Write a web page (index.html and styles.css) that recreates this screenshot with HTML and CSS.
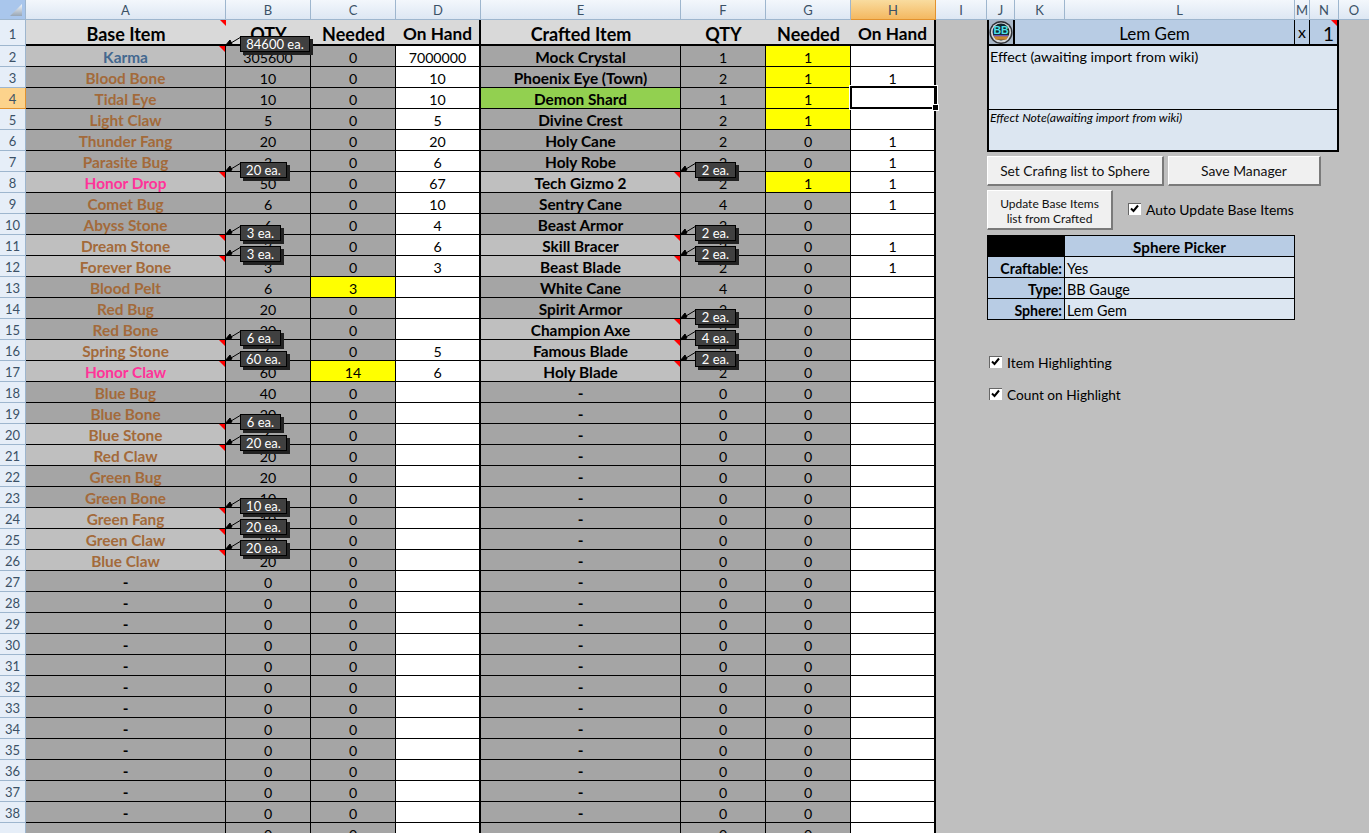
FILE: index.html
```html
<!DOCTYPE html>
<html lang="en">
<head>
<meta charset="utf-8">
<title>Crafting Sheet</title>
<link rel="stylesheet" href="styles.css">
</head>
<body>
<div class="app">
<div class="heads">
<div class="hd corner"><svg width="12" height="12" viewBox="0 0 12 12"><defs><linearGradient id="cg" x1="0" y1="0" x2="0" y2="1"><stop offset="0" stop-color="#f4f8fd"/><stop offset="1" stop-color="#98a6b5"/></linearGradient></defs><path d="M12 0V12H0Z" fill="url(#cg)"/></svg></div>
<div class="hd">A</div><div class="hd">B</div><div class="hd">C</div><div class="hd">D</div><div class="hd">E</div><div class="hd">F</div><div class="hd">G</div><div class="hd on">H</div><div class="hd">I</div><div class="hd">J</div><div class="hd">K</div><div class="hd">L</div><div class="hd">M</div><div class="hd">N</div><div class="hd">O</div>
</div>
<div class="work">
<div class="sheet">
<div class="rh">1</div><div class="c t"><i class="tri"></i>Base Item</div><div class="c t">QTY</div><div class="c t">Needed</div><div class="c t d">On Hand</div><div class="c t">Crafted Item</div><div class="c t">QTY</div><div class="c t">Needed</div><div class="c t d">On Hand</div>
<div class="rh">2</div><div class="c n l karma">Karma<span class="note w70"><svg class="arr" width="16" height="11" viewBox="0 0 16 11"><path d="M16 1L6 7M0 10L7 8L5 4Z"/></svg>84600 ea.</span><i class="tri"></i></div><div class="c">305600</div><div class="c">0</div><div class="c w d">7000000</div><div class="c n">Mock Crystal</div><div class="c">1</div><div class="c y">1</div><div class="c w d"></div>
<div class="rh">3</div><div class="c n br">Blood Bone</div><div class="c">10</div><div class="c">0</div><div class="c w d">10</div><div class="c n">Phoenix Eye (Town)</div><div class="c">2</div><div class="c y">1</div><div class="c w d">1</div>
<div class="rh on">4</div><div class="c n br">Tidal Eye</div><div class="c">10</div><div class="c">0</div><div class="c w d">10</div><div class="c n g">Demon Shard</div><div class="c">1</div><div class="c y">1</div><div class="c w d"><span class="sel"></span></div>
<div class="rh">5</div><div class="c n br">Light Claw</div><div class="c">5</div><div class="c">0</div><div class="c w d">5</div><div class="c n">Divine Crest</div><div class="c">2</div><div class="c y">1</div><div class="c w d"></div>
<div class="rh">6</div><div class="c n br">Thunder Fang</div><div class="c">20</div><div class="c">0</div><div class="c w d">20</div><div class="c n">Holy Cane</div><div class="c">2</div><div class="c">0</div><div class="c w d">1</div>
<div class="rh">7</div><div class="c n br">Parasite Bug</div><div class="c">3</div><div class="c">0</div><div class="c w d">6</div><div class="c n">Holy Robe</div><div class="c">2</div><div class="c">0</div><div class="c w d">1</div>
<div class="rh">8</div><div class="c n l pk">Honor Drop<span class="note w47"><svg class="arr" width="16" height="11" viewBox="0 0 16 11"><path d="M16 1L6 7M0 10L7 8L5 4Z"/></svg>20 ea.</span><i class="tri"></i></div><div class="c">50</div><div class="c">0</div><div class="c w d">67</div><div class="c n l">Tech Gizmo 2<span class="note w41"><svg class="arr" width="16" height="11" viewBox="0 0 16 11"><path d="M16 1L6 7M0 10L7 8L5 4Z"/></svg>2 ea.</span><i class="tri"></i></div><div class="c">2</div><div class="c y">1</div><div class="c w d">1</div>
<div class="rh">9</div><div class="c n br">Comet Bug</div><div class="c">6</div><div class="c">0</div><div class="c w d">10</div><div class="c n">Sentry Cane</div><div class="c">4</div><div class="c">0</div><div class="c w d">1</div>
<div class="rh">10</div><div class="c n br">Abyss Stone</div><div class="c">6</div><div class="c">0</div><div class="c w d">4</div><div class="c n">Beast Armor</div><div class="c">2</div><div class="c">0</div><div class="c w d"></div>
<div class="rh">11</div><div class="c n l br">Dream Stone<span class="note w41"><svg class="arr" width="16" height="11" viewBox="0 0 16 11"><path d="M16 1L6 7M0 10L7 8L5 4Z"/></svg>3 ea.</span><i class="tri"></i></div><div class="c">3</div><div class="c">0</div><div class="c w d">6</div><div class="c n l">Skill Bracer<span class="note w41"><svg class="arr" width="16" height="11" viewBox="0 0 16 11"><path d="M16 1L6 7M0 10L7 8L5 4Z"/></svg>2 ea.</span><i class="tri"></i></div><div class="c">2</div><div class="c">0</div><div class="c w d">1</div>
<div class="rh">12</div><div class="c n l br">Forever Bone<span class="note w41"><svg class="arr" width="16" height="11" viewBox="0 0 16 11"><path d="M16 1L6 7M0 10L7 8L5 4Z"/></svg>3 ea.</span><i class="tri"></i></div><div class="c">3</div><div class="c">0</div><div class="c w d">3</div><div class="c n l">Beast Blade<span class="note w41"><svg class="arr" width="16" height="11" viewBox="0 0 16 11"><path d="M16 1L6 7M0 10L7 8L5 4Z"/></svg>2 ea.</span><i class="tri"></i></div><div class="c">2</div><div class="c">0</div><div class="c w d">1</div>
<div class="rh">13</div><div class="c n br">Blood Pelt</div><div class="c">6</div><div class="c y">3</div><div class="c w d"></div><div class="c n">White Cane</div><div class="c">4</div><div class="c">0</div><div class="c w d"></div>
<div class="rh">14</div><div class="c n br">Red Bug</div><div class="c">20</div><div class="c">0</div><div class="c w d"></div><div class="c n">Spirit Armor</div><div class="c">2</div><div class="c">0</div><div class="c w d"></div>
<div class="rh">15</div><div class="c n br">Red Bone</div><div class="c">20</div><div class="c">0</div><div class="c w d"></div><div class="c n l">Champion Axe<span class="note w41"><svg class="arr" width="16" height="11" viewBox="0 0 16 11"><path d="M16 1L6 7M0 10L7 8L5 4Z"/></svg>2 ea.</span><i class="tri"></i></div><div class="c">2</div><div class="c">0</div><div class="c w d"></div>
<div class="rh">16</div><div class="c n l br">Spring Stone<span class="note w41"><svg class="arr" width="16" height="11" viewBox="0 0 16 11"><path d="M16 1L6 7M0 10L7 8L5 4Z"/></svg>6 ea.</span><i class="tri"></i></div><div class="c">6</div><div class="c">0</div><div class="c w d">5</div><div class="c n l">Famous Blade<span class="note w41"><svg class="arr" width="16" height="11" viewBox="0 0 16 11"><path d="M16 1L6 7M0 10L7 8L5 4Z"/></svg>4 ea.</span><i class="tri"></i></div><div class="c">2</div><div class="c">0</div><div class="c w d"></div>
<div class="rh">17</div><div class="c n l pk">Honor Claw<span class="note w47"><svg class="arr" width="16" height="11" viewBox="0 0 16 11"><path d="M16 1L6 7M0 10L7 8L5 4Z"/></svg>60 ea.</span><i class="tri"></i></div><div class="c">60</div><div class="c y">14</div><div class="c w d">6</div><div class="c n l">Holy Blade<span class="note w41"><svg class="arr" width="16" height="11" viewBox="0 0 16 11"><path d="M16 1L6 7M0 10L7 8L5 4Z"/></svg>2 ea.</span><i class="tri"></i></div><div class="c">2</div><div class="c">0</div><div class="c w d"></div>
<div class="rh">18</div><div class="c n br">Blue Bug</div><div class="c">40</div><div class="c">0</div><div class="c w d"></div><div class="c n">-</div><div class="c">0</div><div class="c">0</div><div class="c w d"></div>
<div class="rh">19</div><div class="c n br">Blue Bone</div><div class="c">20</div><div class="c">0</div><div class="c w d"></div><div class="c n">-</div><div class="c">0</div><div class="c">0</div><div class="c w d"></div>
<div class="rh">20</div><div class="c n l br">Blue Stone<span class="note w41"><svg class="arr" width="16" height="11" viewBox="0 0 16 11"><path d="M16 1L6 7M0 10L7 8L5 4Z"/></svg>6 ea.</span><i class="tri"></i></div><div class="c">6</div><div class="c">0</div><div class="c w d"></div><div class="c n">-</div><div class="c">0</div><div class="c">0</div><div class="c w d"></div>
<div class="rh">21</div><div class="c n l br">Red Claw<span class="note w47"><svg class="arr" width="16" height="11" viewBox="0 0 16 11"><path d="M16 1L6 7M0 10L7 8L5 4Z"/></svg>20 ea.</span><i class="tri"></i></div><div class="c">20</div><div class="c">0</div><div class="c w d"></div><div class="c n">-</div><div class="c">0</div><div class="c">0</div><div class="c w d"></div>
<div class="rh">22</div><div class="c n br">Green Bug</div><div class="c">20</div><div class="c">0</div><div class="c w d"></div><div class="c n">-</div><div class="c">0</div><div class="c">0</div><div class="c w d"></div>
<div class="rh">23</div><div class="c n br">Green Bone</div><div class="c">10</div><div class="c">0</div><div class="c w d"></div><div class="c n">-</div><div class="c">0</div><div class="c">0</div><div class="c w d"></div>
<div class="rh">24</div><div class="c n l br">Green Fang<span class="note w47"><svg class="arr" width="16" height="11" viewBox="0 0 16 11"><path d="M16 1L6 7M0 10L7 8L5 4Z"/></svg>10 ea.</span><i class="tri"></i></div><div class="c">10</div><div class="c">0</div><div class="c w d"></div><div class="c n">-</div><div class="c">0</div><div class="c">0</div><div class="c w d"></div>
<div class="rh">25</div><div class="c n l br">Green Claw<span class="note w47"><svg class="arr" width="16" height="11" viewBox="0 0 16 11"><path d="M16 1L6 7M0 10L7 8L5 4Z"/></svg>20 ea.</span><i class="tri"></i></div><div class="c">20</div><div class="c">0</div><div class="c w d"></div><div class="c n">-</div><div class="c">0</div><div class="c">0</div><div class="c w d"></div>
<div class="rh">26</div><div class="c n l br">Blue Claw<span class="note w47"><svg class="arr" width="16" height="11" viewBox="0 0 16 11"><path d="M16 1L6 7M0 10L7 8L5 4Z"/></svg>20 ea.</span><i class="tri"></i></div><div class="c">20</div><div class="c">0</div><div class="c w d"></div><div class="c n">-</div><div class="c">0</div><div class="c">0</div><div class="c w d"></div>
<div class="rh">27</div><div class="c n">-</div><div class="c">0</div><div class="c">0</div><div class="c w d"></div><div class="c n">-</div><div class="c">0</div><div class="c">0</div><div class="c w d"></div>
<div class="rh">28</div><div class="c n">-</div><div class="c">0</div><div class="c">0</div><div class="c w d"></div><div class="c n">-</div><div class="c">0</div><div class="c">0</div><div class="c w d"></div>
<div class="rh">29</div><div class="c n">-</div><div class="c">0</div><div class="c">0</div><div class="c w d"></div><div class="c n">-</div><div class="c">0</div><div class="c">0</div><div class="c w d"></div>
<div class="rh">30</div><div class="c n">-</div><div class="c">0</div><div class="c">0</div><div class="c w d"></div><div class="c n">-</div><div class="c">0</div><div class="c">0</div><div class="c w d"></div>
<div class="rh">31</div><div class="c n">-</div><div class="c">0</div><div class="c">0</div><div class="c w d"></div><div class="c n">-</div><div class="c">0</div><div class="c">0</div><div class="c w d"></div>
<div class="rh">32</div><div class="c n">-</div><div class="c">0</div><div class="c">0</div><div class="c w d"></div><div class="c n">-</div><div class="c">0</div><div class="c">0</div><div class="c w d"></div>
<div class="rh">33</div><div class="c n">-</div><div class="c">0</div><div class="c">0</div><div class="c w d"></div><div class="c n">-</div><div class="c">0</div><div class="c">0</div><div class="c w d"></div>
<div class="rh">34</div><div class="c n">-</div><div class="c">0</div><div class="c">0</div><div class="c w d"></div><div class="c n">-</div><div class="c">0</div><div class="c">0</div><div class="c w d"></div>
<div class="rh">35</div><div class="c n">-</div><div class="c">0</div><div class="c">0</div><div class="c w d"></div><div class="c n">-</div><div class="c">0</div><div class="c">0</div><div class="c w d"></div>
<div class="rh">36</div><div class="c n">-</div><div class="c">0</div><div class="c">0</div><div class="c w d"></div><div class="c n">-</div><div class="c">0</div><div class="c">0</div><div class="c w d"></div>
<div class="rh">37</div><div class="c n">-</div><div class="c">0</div><div class="c">0</div><div class="c w d"></div><div class="c n">-</div><div class="c">0</div><div class="c">0</div><div class="c w d"></div>
<div class="rh">38</div><div class="c n">-</div><div class="c">0</div><div class="c">0</div><div class="c w d"></div><div class="c n">-</div><div class="c">0</div><div class="c">0</div><div class="c w d"></div>
<div class="rh"></div><div class="c n"></div><div class="c">0</div><div class="c">0</div><div class="c w d"></div><div class="c n"></div><div class="c">0</div><div class="c">0</div><div class="c w d"></div>
</div>
<aside class="side">
<section class="card">
<div class="card-top">
<div class="badge"><svg width="25" height="25" viewBox="0 0 25 25"><circle cx="12.500" cy="12.500" r="12" fill="#2f3136"/><circle cx="12.500" cy="12.500" r="10.500" fill="#d5d8da"/><circle cx="12.500" cy="12" r="8.800" fill="#10262e"/><path d="M4.500 15.500H20.500L18 20H7Z" fill="#c8862e"/><path d="M5 15H20V16.500H5Z" fill="#6a58b8"/><text x="12.500" y="14.500" text-anchor="middle" class="bb">BB</text></svg></div>
<div class="name">Lem Gem</div>
<div class="x">x</div>
<div class="count"><i class="tri"></i>1</div>
</div>
<div class="effect">Effect (awaiting import from wiki)</div>
<div class="effnote">Effect Note(awaiting import from wiki)</div>
</section>
<div class="btns">
<div class="btn b1">Set Crafing list to Sphere</div>
<div class="btn b2">Save Manager</div>
</div>
<div class="btns upd">
<div class="btn b3">Update Base Items<br>list from Crafted</div>
<label class="chk a"><span class="box"><svg width="9" height="9" viewBox="0 0 9 9"><path d="M1 4.500L3.500 7L8 1.500" fill="none" stroke="#000" stroke-width="2"/></svg></span>Auto Update Base Items</label>
</div>
<div class="picker">
<div class="p-k blk"></div><div class="p-h">Sphere Picker</div>
<div class="p-k">Craftable:</div><div class="p-v">Yes</div>
<div class="p-k">Type:</div><div class="p-v">BB Gauge</div>
<div class="p-k">Sphere:</div><div class="p-v">Lem Gem</div>
</div>
<label class="chk h1"><span class="box"><svg width="9" height="9" viewBox="0 0 9 9"><path d="M1 4.500L3.500 7L8 1.500" fill="none" stroke="#000" stroke-width="2"/></svg></span>Item Highlighting</label>
<label class="chk h2"><span class="box"><svg width="9" height="9" viewBox="0 0 9 9"><path d="M1 4.500L3.500 7L8 1.500" fill="none" stroke="#000" stroke-width="2"/></svg></span>Count on Highlight</label>
</aside>
</div>
</div>
</body>
</html>
```

FILE: styles.css
```css
* { box-sizing: border-box; }
html, body { margin: 0; height: 100%; overflow: hidden; }
body { background: #bfbfbf; color: #000; font-family: "Lato", "Open Sans", sans-serif; }
.app { width: 1369px; height: 833px; overflow: hidden; }

.heads {
  display: grid;
  grid-template-columns: 26px 200px 85px 85px 85px 200px 85px 85px 85px 51px 28px 50px 230px 15px 29px 31px;
  height: 20px;
}
.hd {
  display: flex; align-items: center; justify-content: center;
  font-size: 13px; color: #3b5166;
  background: linear-gradient(#f3f7fc, #dde7f3);
  border-right: 1px solid #9eb6ce;
  border-bottom: 1px solid #9eb6ce;
}
.hd.corner { justify-content: flex-end; align-items: flex-end; padding: 0 3px 3px 0; background: #a9c6ec; }
.hd.on { background: linear-gradient(#f9dc9f, #f4b860); border-color: #e2922e; }

.work { display: flex; height: 813px; }
.sheet {
  display: grid;
  grid-template-columns: 26px 200px 85px 85px 85px 200px 85px 85px 85px;
  grid-template-rows: 26px repeat(38, 21px);
  width: 936px; flex: none;
  align-content: start;
}
.rh {
  display: flex; align-items: center; justify-content: center;
  padding-top: 2px;
  font-size: 13px; color: #3b5166;
  background: #e6eef8;
  border-right: 1px solid #9eb6ce;
  border-bottom: 1px solid #9eb6ce;
}
.rh.on { background: #fcd38c; border-color: #e2922e; }

.c {
  position: relative;
  display: flex; align-items: center; justify-content: center;
  padding-top: 2px;
  font-size: 14.2px; white-space: nowrap;
  background: #a5a5a5;
  border-right: 1px solid #000;
  border-bottom: 1px solid #000;
}
.c.t { padding-top: 3px; font-size: 18px; font-weight: 700; background: #d9d9d9; border-right: 0; border-bottom: 2px solid #000; }
.c.t.d { border-right: 2px solid #000; font-size: 17.2px; }
.c.n { font-size: 15.4px; font-weight: 700; }
.c.l { background: #bfbfbf; }
.c.g { background: #92d050; }
.c.y { background: #ffff00; }
.c.w { background: #fff; }
.c.d { border-right: 2px solid #000; }
.karma { color: #44688f; }
.br { color: #a36a3a; }
.pk { color: #ff3399; }

.tri {
  position: absolute; top: 0; right: 0; z-index: 2;
  border-top: 6px solid #f00; border-left: 6px solid transparent;
}

.note {
  position: absolute; z-index: 5; left: 214px; top: -10px; height: 16px;
  display: flex; align-items: center; justify-content: center;
  font-size: 13px; font-weight: 400; color: #fff;
  background: #404040; border: 1px solid #000;
  box-shadow: 3px 3px 0 #222;
}
.w70 { width: 70px; }
.w47 { width: 47px; }
.w41 { width: 41px; }
.arr {
  position: absolute; left: -16px; top: -1px;
  stroke: #000; fill: #000;
}

.sel {
  position: absolute; z-index: 3; left: -1px; top: -2px; right: -3px; bottom: -1px;
  border: 2px solid #000;
  box-shadow: 0 0 0 1px #fff;
}
.sel::after {
  content: ""; position: absolute; right: -4px; bottom: -4px;
  width: 5px; height: 5px; background: #000; border: 1px solid #fff;
}

.side { flex: 1; padding-left: 51px; font-size: 14px; }
.card { width: 352px; height: 132px; border: 2px solid #000; border-top: 0; display: flex; flex-direction: column; }
.card-top { display: flex; height: 26px; background: #b8cce4; border-bottom: 2px solid #000; flex: none; }
.badge { width: 26px; flex: none; border-right: 2px solid #000; background: #a9b8c9; display: flex; align-items: center; justify-content: center; overflow: hidden; }
.bb { font-family: "Liberation Sans", sans-serif; font-size: 11px; font-weight: 700; fill: #4fe0e6; }
.name { width: 280px; flex: none; text-align: center; font-size: 17px; line-height: 27px; border-right: 1px solid #000; }
.x { width: 15px; flex: none; text-align: center; font-size: 16px; line-height: 23px; border-right: 1px solid #000; }
.count { position: relative; flex: 1; text-align: right; font-size: 19px; line-height: 27px; padding-right: 3px; }
.effect { height: 64px; flex: none; background: #dce6f1; border-bottom: 1px solid #000; padding: 1px 1px 0; font-size: 14.3px; line-height: 20px; }
.effnote { flex: 1; background: #dce6f1; padding: 0 1px; font-size: 12.2px; line-height: 16px; font-style: italic; }

.btns { display: flex; gap: 4px; margin-top: 4px; }
.btn {
  display: flex; align-items: center; justify-content: center; text-align: center;
  background: #f0f0f0; color: #111;
  border: 1px solid #fff; border-right: 2px solid #7a7a7a; border-bottom: 2px solid #7a7a7a;
}
.b1 { width: 177px; height: 30px; font-size: 13.8px; }
.b2 { width: 153px; height: 30px; font-size: 13.9px; }
.upd { margin-top: 4px; gap: 15px; align-items: center; }
.b3 { width: 126px; height: 40px; font-size: 12px; line-height: 15px; padding-top: 2px; }

.chk { display: flex; align-items: center; gap: 5px; font-size: 13.9px; line-height: 18px; }
.chk.h2 { font-size: 13.7px; }
.box { width: 13px; height: 12px; margin-top: -3px; background: #fff; box-shadow: inset 1px 1px 0 #666; display: flex; align-items: center; justify-content: center; }

.picker {
  display: grid; grid-template-columns: 77px 230px; grid-auto-rows: 21px;
  width: 308px; margin-top: 5px;
  border-top: 1px solid #000; border-left: 1px solid #000;
}
.picker > div { border-right: 1px solid #000; border-bottom: 1px solid #000; font-size: 14.4px; line-height: 20px; padding: 2px 2px 0; }
.picker > .p-k { background: #b8cce4; text-align: right; font-weight: 700; font-size: 14.2px; }
.picker > .p-k.blk { background: #000; }
.picker > .p-h { background: #b8cce4; text-align: center; font-weight: 700; font-size: 15.2px; padding-top: 1px; }
.p-v { background: #dce6f1; }

.h1 { margin: 34px 0 0 2px; }
.h2 { margin: 14px 0 0 2px; }
```
